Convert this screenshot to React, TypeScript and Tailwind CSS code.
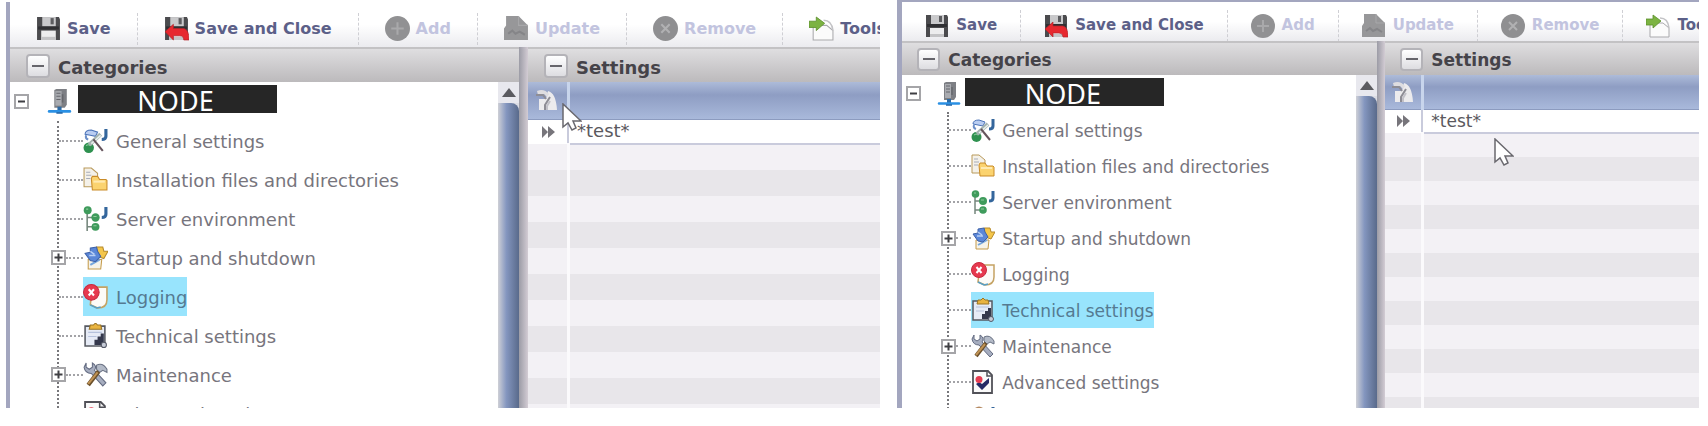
import { useState } from "react";
import type { ReactNode } from "react";
import clsx from "clsx";

type Size = "lg" | "md";

// Same console at two zoom levels
const SIZES = {
  lg: {
    panel: "flex-[875] mt-0.5 border-l-4",
    toolbar: "h-[45px] text-[16px]",
    tool: "px-[26px] gap-1.5",
    icon: "size-[25px]",
    sidebar: "w-[509px]",
    header: "h-[35px] text-[18px] pl-4",
    toggle: "size-6",
    nodeRow: "h-[39px] pl-1",
    nodeIcon: "ml-[18px] mr-1.5",
    tree: "ml-[47px] text-[18px]",
    row: "h-[39px]",
    label: "pl-2 pt-0.5",
    dash: "w-6",
    shortDash: "w-4",
    splitter: "w-[9px]",
    gridHead: "h-[37px]",
    gridRow: "h-[25px] text-[18px]",
    stripe: "h-[26px]",
    indexCol: "w-10",
  },
  md: {
    panel: "flex-[801] border-l-[5px] border-t-2",
    toolbar: "h-[39px] text-[15px]",
    tool: "px-[23px] gap-[7px]",
    icon: "size-6",
    sidebar: "w-[475px]",
    header: "h-[34px] text-[17px] pl-[15px]",
    toggle: "size-[23px]",
    nodeRow: "h-[37px] pl-1",
    nodeIcon: "ml-4 mr-1",
    tree: "ml-[45px] text-[17px]",
    row: "h-9",
    label: "pl-[7px] pt-[3px]",
    dash: "w-[22px]",
    shortDash: "w-[14px]",
    splitter: "w-2",
    gridHead: "h-[34px]",
    gridRow: "h-6 text-[17px]",
    stripe: "h-6",
    indexCol: "w-[37px]",
  },
};

function Svg({ className, children }: { className?: string; children: ReactNode }) {
  return (
    <svg viewBox="0 0 24 24" fill="none" aria-hidden="true" className={clsx("shrink-0", className)}>
      {children}
    </svg>
  );
}

const floppy = (
  <>
    <path d="M1 1h21l1 2v20H1z" fill="#4b4b4e" />
    <path d="M6 1h13v9H6z" fill="#c9c9cb" />
    <path d="M14 2h3v6h-3z" fill="#5d5d60" />
    <path d="M2 10h20v3H2z" fill="#303033" />
    <path d="M5 14h14v9H5z" fill="#ededee" />
    <path d="M5 20h14v3H5z" fill="#c4c4c6" />
  </>
);

const blueHook = <path d="M22 1v7q0 3-4 3" stroke="#34669c" strokeWidth="3" />;

const ICONS = {
  save: floppy,
  saveClose: (
    <>
      {floppy}
      <path d="M1 15l8-7v4h10q5 1 5 11h-5q0-4-4-4H9v4z" fill="#e7282f" stroke="#b3222a" strokeWidth="0.7" />
    </>
  ),
  add: (
    <>
      <circle cx="12" cy="12" r="12" fill="#919193" />
      <path d="M12 6v12M6 12h12" stroke="#a9a9ab" strokeWidth="2" />
    </>
  ),
  update: (
    <>
      <path d="M2 0h12l9 9v14H0V12l2-3z" fill="#979799" />
      <path d="M14 0v9h9" stroke="#a8a8aa" />
      <path d="M4 17l4-3 3 3 4-2 5 3" stroke="#858588" strokeWidth="2" />
    </>
  ),
  remove: (
    <>
      <circle cx="12" cy="12" r="12" fill="#8f8f91" />
      <path d="M8 8l8 8M16 8l-8 8" stroke="#b1b1b3" strokeWidth="2" />
    </>
  ),
  tools: (
    <>
      <path d="M4 9h13l6 5v9H4z" fill="#fbfbfb" stroke="#a9a9ac" />
      <path d="M14 4q8 0 9 10" stroke="#c3c3c6" strokeWidth="1.5" />
      <path d="M0 5h7V1l8 6-8 7v-3H0z" fill="#7cb342" stroke="#5b8f2b" strokeWidth="0.8" />
    </>
  ),
  server: (
    <>
      <path d="M7 1l2-1h10v15l-2 3H7z" fill="#7d7f84" />
      <path d="M8 2h6v14H8z" fill="#a9abb0" />
      <path d="M9 4h4M9 7h4M9 10h4" stroke="#65676c" />
      <path d="M15 5v8" stroke="#65676c" strokeWidth="1.5" />
      <path d="M12 17v4" stroke="#2c6aa5" strokeWidth="4" />
      <path d="M2 21.5h20" stroke="#2a90e4" strokeWidth="2.5" strokeLinecap="round" />
      <path d="M9 23h6" stroke="#1d62a8" strokeWidth="1.5" />
    </>
  ),
  general: (
    <>
      <path d="M2 6q0-4 6-4l6 2-2 4-5-1z" fill="#b9cdf2" stroke="#4c74b8" />
      <path d="M3 7q-1 3 2 4" stroke="#6c8fc8" strokeWidth="2" />
      <circle cx="5.5" cy="19" r="5" fill="#2f9150" />
      <path d="M3 17q2-2 4 0" stroke="#8fcf9f" />
      <path d="M6 16L17 6" stroke="#a4b3b0" strokeWidth="4" />
      <path d="M8 15L17 7" stroke="#e9f0ee" strokeWidth="1.5" />
      <path d="M10 11l9 11" stroke="#65545c" strokeWidth="2" />
      {blueHook}
    </>
  ),
  files: (
    <>
      <path d="M1 1h7l6 5v13H1z" fill="#f4f1e9" stroke="#b99a5b" />
      <path d="M3 5h4M3 8h5M3 11h4" stroke="#a7acb9" />
      <path d="M8 11l1-2h5l2 3h6l1 1v9H9z" fill="#fbd36f" stroke="#c98b28" />
      <path d="M10 14h11" stroke="#ffeab0" strokeWidth="2" />
    </>
  ),
  environment: (
    <>
      <path d="M4 4v20M4 11h7M4 20h7" stroke="#75877d" strokeWidth="1.5" />
      <circle cx="4.5" cy="4" r="3.8" fill="#3f9b5c" />
      <circle cx="12" cy="11" r="4" fill="#3f9b5c" />
      <circle cx="12" cy="20" r="3.8" fill="#3f9b5c" />
      <path d="M3 3h2M10 10h3M10 19h3" stroke="#8ecb9d" />
      {blueHook}
    </>
  ),
  startup: (
    <>
      <path d="M5 14h13l-1 9H5z" fill="#f6f3ea" stroke="#c59b4a" />
      <path d="M7 19l9-5" stroke="#76a6dd" strokeWidth="2" />
      <path d="M13 2h6l1 4h4l-4 7-6-2z" fill="#f4c64b" stroke="#b68a2a" />
      <path d="M7 3l6-1 1 4 3 5-5 5-5-1-5-7 5-1z" fill="#5b87d8" stroke="#3f62a8" />
      <path d="M7 6l4 3M6 10h6" stroke="#b8cff4" strokeWidth="1.5" />
    </>
  ),
  logging: (
    <>
      <path d="M9 3h14v12q0 8-9 8l-7-3z" fill="#fdfbf7" stroke="#c5a363" strokeWidth="1.5" />
      <path d="M7 20l6 3 4-1" stroke="#5a9fc4" strokeWidth="1.5" />
      <circle cx="8" cy="8" r="7.5" fill="#e6394e" stroke="#c72a3e" />
      <path d="M5.5 5l5 6M10.5 5l-5 6" stroke="#fff" strokeWidth="2" />
    </>
  ),
  technical: (
    <>
      <path d="M2 3h19v19H2z" fill="#e6ebf6" stroke="#565962" strokeWidth="1.5" />
      <path d="M5 9h13M5 13h8" stroke="#b6c2dc" />
      <path d="M7 2h3l2-2 2 2h3l1 4H6z" fill="#e9b440" stroke="#9b7424" />
      <path d="M11 21v-5h3v-3h3v-3h3v11z" fill="#34384c" />
      <circle cx="20" cy="21" r="2.5" fill="#c7ccd8" stroke="#555967" />
    </>
  ),
  maintenance: (
    <>
      <path d="M3 1v4l3 2 3-2V1q5 3 2 7l11 12-3 3L8 11Q2 11 1 5z" fill="#a6adbf" stroke="#646c82" />
      <path d="M13 3q6-3 10 4v3l-4-2-3 2-3-3z" fill="#b3bac7" stroke="#6a7284" />
      <path d="M15 9L5 22" stroke="#6a4f2a" strokeWidth="4" />
      <path d="M14 10L5 21" stroke="#c09355" strokeWidth="2" />
    </>
  ),
  advanced: (
    <>
      <path d="M2 1h15l4 4v18H2z" fill="#fafafa" stroke="#515158" strokeWidth="1.8" />
      <path d="M16 1v5h5" stroke="#515158" strokeWidth="1.5" />
      <path d="M18 8v5l-7 7-6-6 3-2 3 2z" fill="#252b66" />
      <circle cx="8" cy="9.5" r="3.5" fill="#e63b50" />
    </>
  ),
  more: (
    <>
      <path d="M4 2q4-3 8 0v8H4z" fill="#b58a62" />
      {blueHook}
    </>
  ),
};

type IconKey = keyof typeof ICONS;

const TOOLS: { label: string; icon: IconKey; disabled?: boolean }[] = [
  { label: "Save", icon: "save" },
  { label: "Save and Close", icon: "saveClose" },
  { label: "Add", icon: "add", disabled: true },
  { label: "Update", icon: "update", disabled: true },
  { label: "Remove", icon: "remove", disabled: true },
  { label: "Tools", icon: "tools" },
];

const CATEGORIES: { label: string; icon: IconKey; expandable?: boolean }[] = [
  { label: "General settings", icon: "general" },
  { label: "Installation files and directories", icon: "files" },
  { label: "Server environment", icon: "environment" },
  { label: "Startup and shutdown", icon: "startup", expandable: true },
  { label: "Logging", icon: "logging" },
  { label: "Technical settings", icon: "technical" },
  { label: "Maintenance", icon: "maintenance", expandable: true },
  { label: "Advanced settings", icon: "advanced" },
  { label: "", icon: "more" },
];

function Expander({ open, className }: { open?: boolean; className?: string }) {
  return (
    <button
      aria-label={open ? "Collapse" : "Expand"}
      className={clsx("size-[15px] shrink-0 border-2 border-[#a5a5a8] bg-white", className)}
    >
      <svg viewBox="0 0 11 11" className="size-[11px]" fill="none" stroke="#3f3f43" strokeWidth="2">
        <path d={open ? "M2 5.5h7" : "M1.5 5.5h8M5.5 1.5v8"} />
      </svg>
    </button>
  );
}

function PanelHeader({ title, size }: { title: string; size: Size }) {
  const s = SIZES[size];
  return (
    <header
      className={clsx(
        "flex shrink-0 items-center gap-2 border-t-2 border-[#c3c2c4] bg-linear-to-b from-[#dfdee0] to-[#bcbabc] font-bold text-[#454349]",
        s.header
      )}
    >
      <button
        aria-label={`Collapse ${title}`}
        className={clsx(
          "flex shrink-0 items-center justify-center rounded-sm border-2 border-[#b4b3b8] bg-linear-to-b from-white to-[#dddde1]",
          s.toggle
        )}
      >
        <span className="h-0.5 w-3 bg-[#66656b]" />
      </button>
      <h2 className="pt-[3px]">{title}</h2>
    </header>
  );
}

function Toolbar({ size }: { size: Size }) {
  const s = SIZES[size];
  return (
    <div className={clsx("flex shrink-0 overflow-hidden bg-linear-to-b from-white from-50% to-[#ebebef] pt-2", s.toolbar)}>
      {TOOLS.map((t, i) => (
        <div key={t.label} className="flex shrink-0 items-center">
          {i > 0 && <span className="h-8 border-l border-dashed border-[#cfcfd4]" />}
          <button
            disabled={t.disabled}
            className={clsx(
              "flex items-center font-bold whitespace-nowrap",
              s.tool,
              t.disabled ? "text-[#c2c4df]" : "text-[#5c6088]"
            )}
          >
            <Svg className={s.icon}>{ICONS[t.icon]}</Svg>
            {t.label}
          </button>
        </div>
      ))}
    </div>
  );
}

function CategoryTree({ size, initial }: { size: Size; initial: string }) {
  const s = SIZES[size];
  const [selected, setSelected] = useState(initial);

  return (
    <nav aria-label="Categories" className="min-w-0 flex-1 overflow-hidden">
      <div className={clsx("flex items-center", s.nodeRow)}>
        <Expander open />
        <Svg className={clsx(s.icon, s.nodeIcon)}>{ICONS.server}</Svg>
        <span className="mt-[3px] h-7 w-[199px] self-start bg-[#262626] pr-1 text-center font-['Noto_Sans',sans-serif] text-[27px] leading-[31px] text-white">
          NODE
        </span>
      </div>
      <ul className={clsx("border-l-2 border-dotted border-[#77777b] text-[#77757d]", s.tree)}>
        {CATEGORIES.map(c => (
          <li key={c.icon} className={clsx("flex items-center", s.row)}>
            {c.expandable && <Expander className="-ml-2" />}
            <span
              className={clsx(
                "border-t-2 border-dotted border-[#a3a3a7]",
                c.expandable ? s.shortDash : s.dash,
                c.expandable && "box-content pr-px"
              )}
            />
            <button
              onClick={() => setSelected(c.label)}
              className={clsx(
                "flex h-full items-center whitespace-nowrap",
                selected === c.label && "bg-[#98e4fd] text-[#557a91]"
              )}
            >
              <Svg className={s.icon}>{ICONS[c.icon]}</Svg>
              <span className={s.label}>{c.label}</span>
            </button>
          </li>
        ))}
      </ul>
    </nav>
  );
}

function Scrollbar() {
  return (
    <div className="flex w-[21px] shrink-0 flex-col bg-[#dcdde4]">
      <button aria-label="Scroll up" className="flex h-[21px] items-center justify-center bg-[#e8e8ee]">
        <svg viewBox="0 0 14 9" className="w-3.5" fill="#5b5b60">
          <path d="M7 0l7 9H0z" />
        </svg>
      </button>
      <div className="flex-1 rounded-tr-lg bg-linear-to-r from-[#cfd0d6] via-[#8496bf] via-40% to-[#596a8b]" />
    </div>
  );
}

function SettingsGrid({ size }: { size: Size }) {
  const s = SIZES[size];
  return (
    <div className="min-h-0 flex-1 overflow-hidden">
      <table className="w-full table-fixed border-collapse">
        <thead>
          <tr className={clsx("bg-linear-to-b from-[#adbbd9] via-[#8e9dc3] via-35% to-[#a9b9db]", s.gridHead)}>
            <th className={clsx("border-b border-[#8c9bbf] p-0", s.indexCol)}>
              <Svg className="mx-auto size-6">
                <path d="M4 11h7l2-8q8 2 9 19H4z" fill="#ecebed" />
                <path d="M2 3q7-3 12 3l-2 3-3-3-6 1z" fill="#dedde0" />
                <path d="M1 7h7l3 4M15 9l-5 8v5" stroke="#8e8d95" strokeWidth="2" />
                <path d="M15 13l-3 5v4" stroke="#c2c1c8" strokeWidth="2" />
              </Svg>
            </th>
            <th className="border-b border-l-[3px] border-b-[#8c9bbf] border-l-[#c8d5ec]" />
          </tr>
        </thead>
        <tbody>
          <tr className={clsx("bg-white leading-5 text-[#5b595e]", s.gridRow)}>
            <td className="p-0">
              <svg viewBox="0 0 14 12" className="mx-auto w-3.5" fill="#77757b">
                <path d="M1 0l6 6-6 6zM7 0l7 6-7 6z" />
              </svg>
            </td>
            <td className="border-b-2 border-l-2 border-[#c9cbdc] p-0 pl-2">*test*</td>
          </tr>
          {Array.from({ length: 14 }, (_, i) => (
            <tr key={i} className={clsx("odd:bg-[#e8e6ea] even:bg-[#f3f1f5]", s.stripe)}>
              <td className="p-0" />
              <td className="border-l-[3px] border-[#fbfafc] p-0" />
            </tr>
          ))}
        </tbody>
      </table>
    </div>
  );
}

function Pointer({ className }: { className: string }) {
  return (
    <svg viewBox="0 0 20 28" aria-hidden="true" className={clsx("absolute w-5", className)}>
      <path d="M1 1v23l5-4 4 7 4-2-3-7h8z" fill="#fff" stroke="#69686e" strokeWidth="1.5" />
    </svg>
  );
}

function Console({ size, selected, pointer }: { size: Size; selected: string; pointer: string }) {
  const s = SIZES[size];
  return (
    <section className={clsx("flex min-w-0 flex-col overflow-hidden border-[#a3a6bf]", s.panel)}>
      <Toolbar size={size} />
      <div className="flex min-h-0 flex-1">
        <div className={clsx("flex shrink-0 flex-col", s.sidebar)}>
          <PanelHeader title="Categories" size={size} />
          <div className="flex min-h-0 flex-1">
            <CategoryTree size={size} initial={selected} />
            <Scrollbar />
          </div>
        </div>
        <div className={clsx("shrink-0 bg-linear-to-r from-[#9c9ca6] to-[#d3ccd4]", s.splitter)} />
        <div className="relative flex min-w-0 flex-1 flex-col">
          <PanelHeader title="Settings" size={size} />
          <SettingsGrid size={size} />
          <Pointer className={pointer} />
        </div>
      </div>
    </section>
  );
}

export default function App() {
  return (
    <main className="flex h-screen gap-[17px] bg-white pr-[9px] pb-[18px] pl-1.5 font-['DejaVu_Sans',Verdana,sans-serif]">
      <Console size="lg" selected="Logging" pointer="top-14 left-[34px]" />
      <Console size="md" selected="Technical settings" pointer="top-[97px] left-[109px]" />
    </main>
  );
}
